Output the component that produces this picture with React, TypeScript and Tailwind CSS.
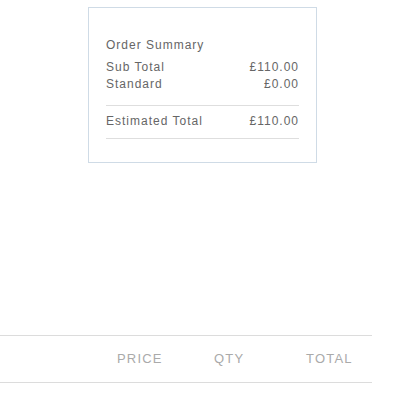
export default function App() {
  return (
    <div className="w-[420px] h-[420px] bg-white relative font-['Liberation_Sans',Arial,sans-serif]">
      <div className="pt-[7px] pl-[88px]">
        <div className="w-[229px] h-[156px] border border-[#cfdbe6] px-[17px] pt-[29px] text-[12px] tracking-[1px] text-[#666666]">
          <div className="leading-[17px]">Order Summary</div>
          <div className="mt-[5px] flex justify-between leading-[17px]">
            <span>Sub Total</span>
            <span>£110.00</span>
          </div>
          <div className="flex justify-between leading-[17px]">
            <span>Standard</span>
            <span>£0.00</span>
          </div>
          <div className="mt-[12px] border-t border-[#dedede]" />
          <div className="mt-[7px] flex justify-between leading-[17px]">
            <span>Estimated Total</span>
            <span>£110.00</span>
          </div>
          <div className="mt-[8px] border-t border-[#dedede]" />
        </div>
      </div>
      <div className="mt-[172px] w-[372px] border-t border-b border-[#dcdcdc] h-[48px] flex items-center text-[13px] tracking-[1.2px] text-[#aaaaaa]">
        <div className="w-[117px]" />
        <div className="w-[97px]">PRICE</div>
        <div className="w-[92px]">QTY</div>
        <div>TOTAL</div>
      </div>
    </div>
  );
}
